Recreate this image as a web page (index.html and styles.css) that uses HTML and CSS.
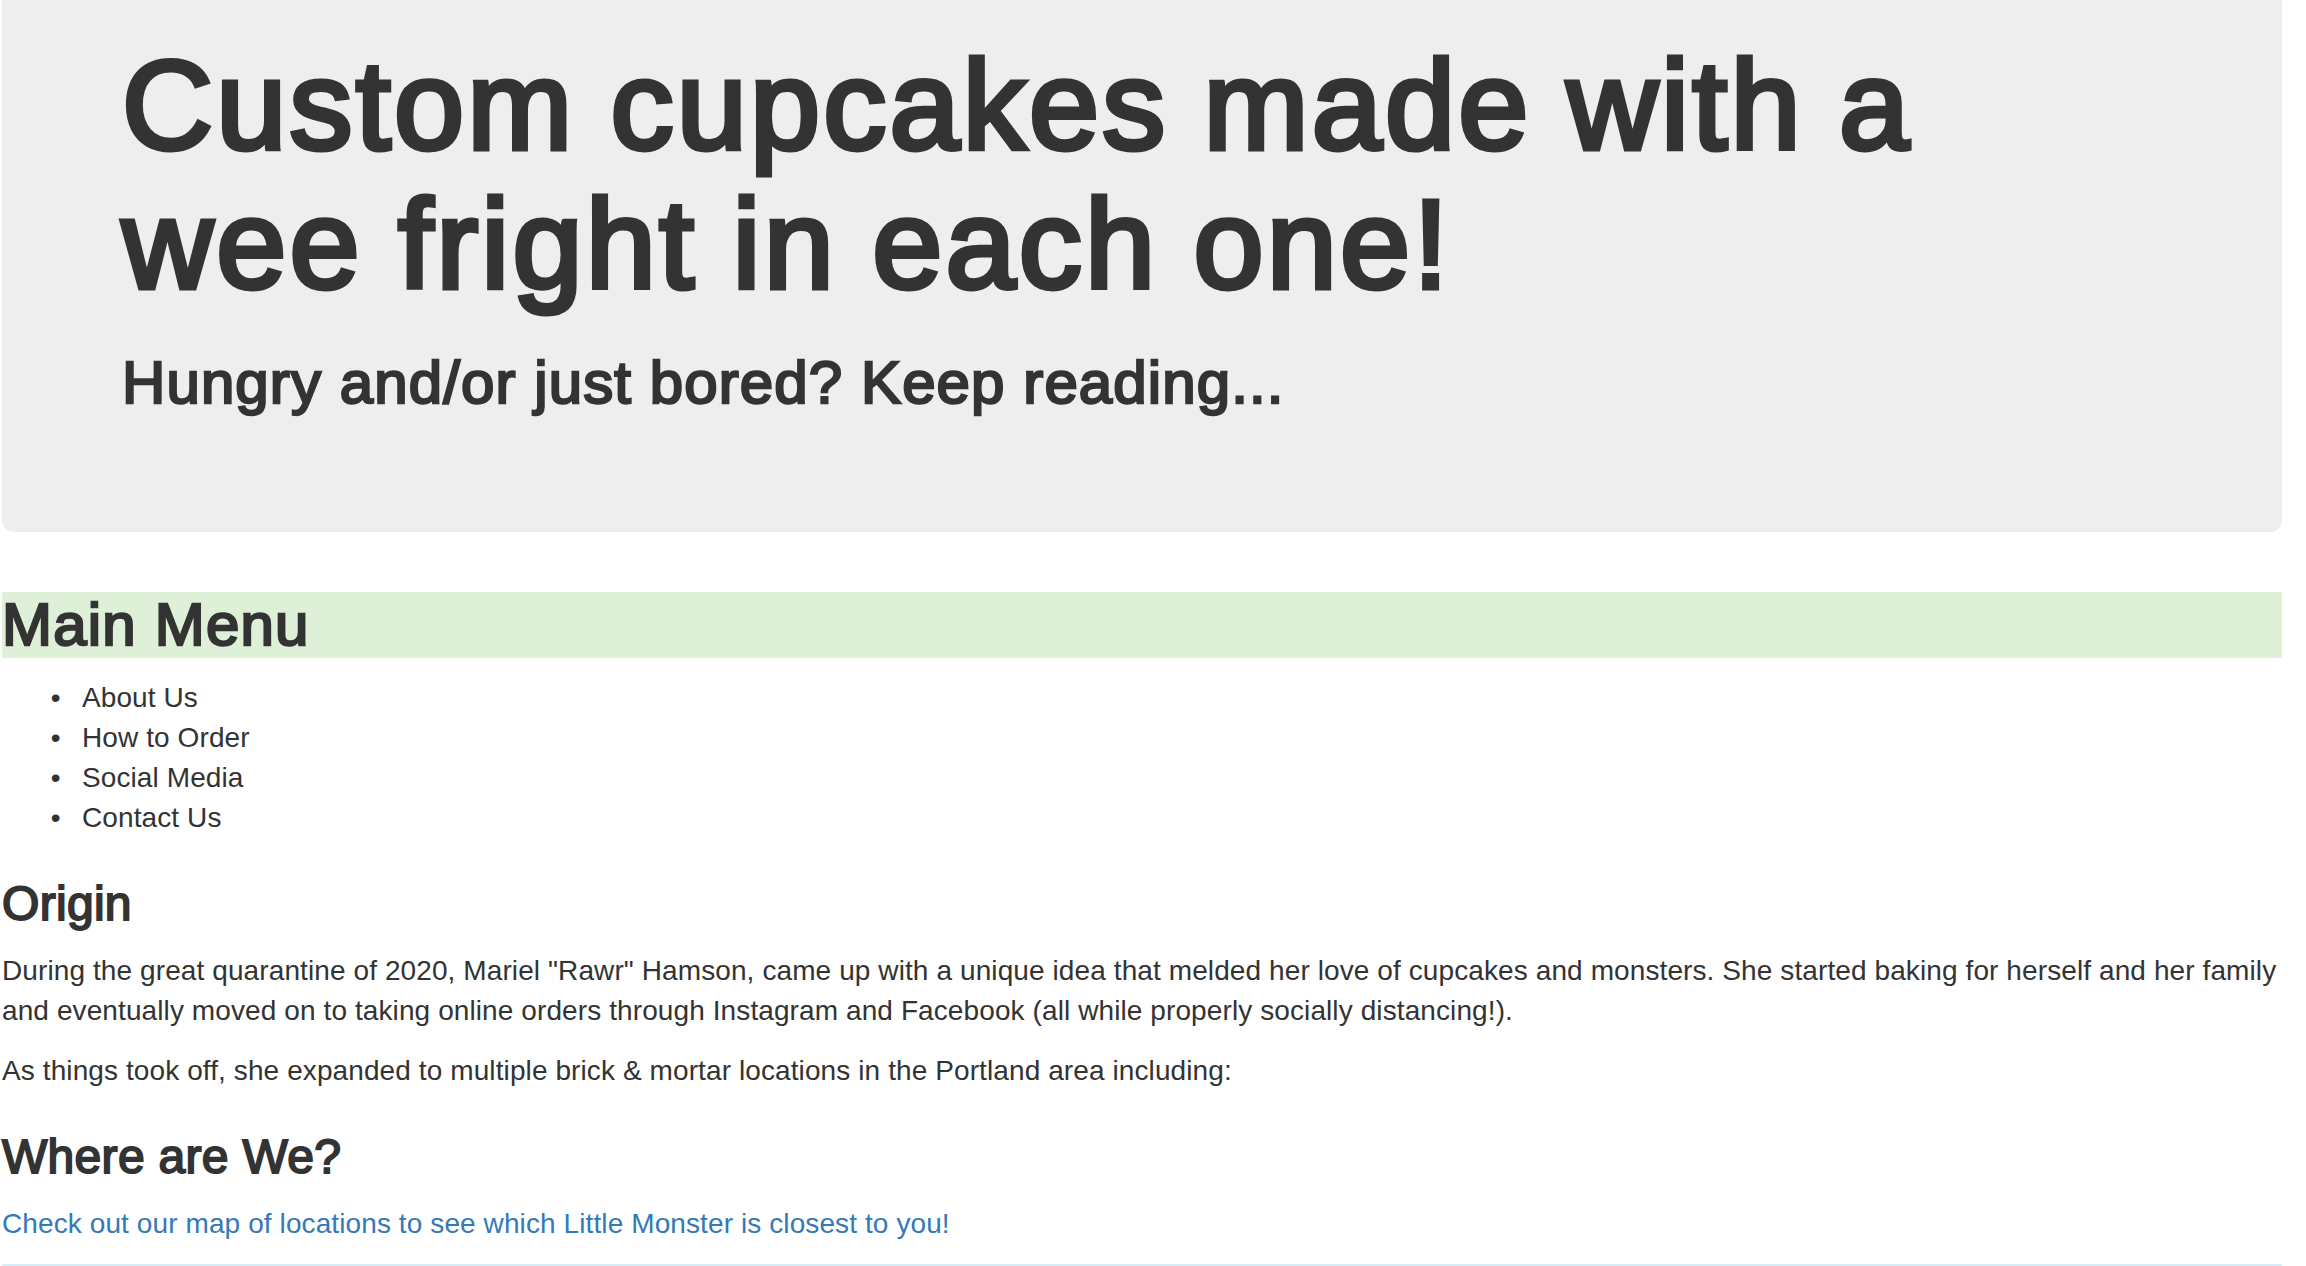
FILE: index.html
```html
<!DOCTYPE html>
<html lang="en">
<head>
<meta charset="utf-8">
<title>Little Monster Cupcakes</title>
<link rel="stylesheet" href="styles.css">
</head>
<body>
<div class="page">
  <header class="jumbotron">
    <h1 class="hero-title">Custom cupcakes made with a wee fright in each one!</h1>
    <h2 class="hero-sub">Hungry and/or just bored? Keep reading...</h2>
  </header>

  <h2 class="menu-title">Main Menu</h2>
  <ul class="menu-list">
    <li>About Us</li>
    <li>How to Order</li>
    <li>Social Media</li>
    <li>Contact Us</li>
  </ul>

  <h3 class="section-title">Origin</h3>
  <p class="text">During the great quarantine of 2020, Mariel "Rawr" Hamson, came up with a unique idea that melded her love of cupcakes and monsters. She started baking for herself and her family and eventually moved on to taking online orders through Instagram and Facebook (all while properly socially distancing!).</p>
  <p class="text">As things took off, she expanded to multiple brick &amp; mortar locations in the Portland area including:</p>

  <h3 class="section-title">Where are We?</h3>
  <p class="text"><a class="link" href="#">Check out our map of locations to see which Little Monster is closest to you!</a></p>

  <div class="info-band"></div>
</div>
</body>
</html>
```

FILE: styles.css
```css
html, body {
  margin: 0;
  padding: 0;
  background: #fff;
}

body {
  font-family: "Liberation Sans", Arial, Helvetica, sans-serif;
  font-size: 28px;
  line-height: 40px;
  color: #333;
  letter-spacing: 0.1px;
}

.page {
  margin: 0 24px 0 2px;
}

.jumbotron {
  background: #eee;
  border-radius: 0 0 12px 12px;
  padding: 37px 120px 116px;
  margin-bottom: 60px;
}

.hero-title {
  margin: 0;
  font-size: 126px;
  line-height: 1.1;
  font-weight: 400;
  letter-spacing: 3.2px;
  word-spacing: -3px;
  -webkit-text-stroke: 5px #333;
}

.hero-sub {
  margin: 36px 0 0;
  font-size: 60px;
  line-height: 66px;
  font-weight: 400;
  letter-spacing: 1.1px;
  -webkit-text-stroke: 2.4px #333;
}

.menu-title {
  margin: 0 0 20px;
  font-size: 60px;
  line-height: 66px;
  font-weight: 400;
  letter-spacing: 1.2px;
  -webkit-text-stroke: 2.4px #333;
  background: #dff0d8;
}

.menu-list {
  margin: 0 0 20px;
  padding-left: 80px;
}

.menu-list li::marker {
  content: "\2022\00a0\00a0\2009";
}

.section-title {
  margin: 40px 0 20px;
  font-size: 48px;
  line-height: 1.1;
  font-weight: 400;
  letter-spacing: 0.3px;
  -webkit-text-stroke: 1.9px #333;
}

.text {
  margin: 0 0 20px;
}

.link {
  color: #337ab7;
  text-decoration: none;
}

.info-band {
  background: #d9edf7;
  height: 40px;
}
```
